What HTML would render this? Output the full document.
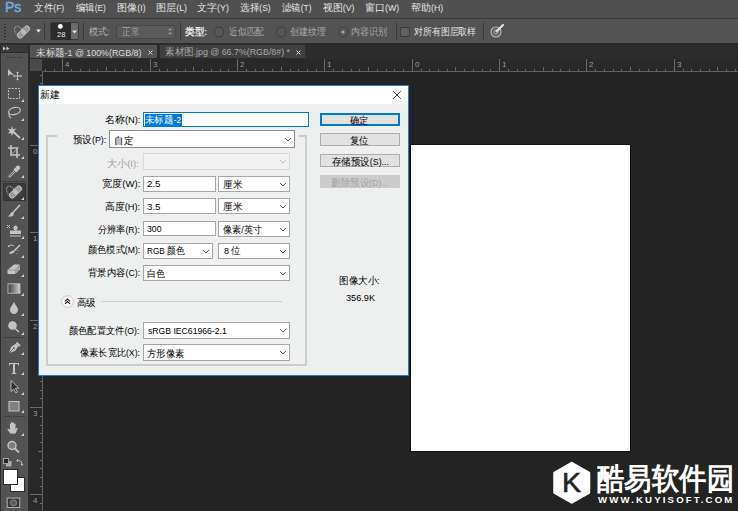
<!DOCTYPE html>
<html><head><meta charset="utf-8"><style>
html,body{margin:0;padding:0;width:738px;height:511px;overflow:hidden;background:#232323;position:relative}
</style></head><body>
<div style="position:absolute;left:0px;top:0px;width:738px;height:18px;background:#505050"></div><div style="position:absolute;left:0px;top:18px;width:738px;height:1px;background:#3a3a3a"></div><div style="position:absolute;left:4.79px;top:-3.00px;white-space:nowrap;line-height:20px;font-family:'Liberation Sans',sans-serif;font-size:15.5px;color:#74aadd;-webkit-text-stroke:0.5px #74aadd;transform:scaleX(0.9059);transform-origin:0 0">Ps</div><div style="position:absolute;left:34.03px;top:-2.00px;white-space:nowrap;line-height:20px;font-family:'Liberation Sans',sans-serif;font-size:10.2px;color:#e4e4e4;;transform:scaleX(0.9667);transform-origin:0 0">文件<span style="font-size:8.8px">(F)</span></div><div style="position:absolute;left:76.00px;top:-2.00px;white-space:nowrap;line-height:20px;font-family:'Liberation Sans',sans-serif;font-size:10.2px;color:#e4e4e4;;transform:scaleX(0.9355);transform-origin:0 0">编辑<span style="font-size:8.8px">(E)</span></div><div style="position:absolute;left:116.69px;top:-2.00px;white-space:nowrap;line-height:20px;font-family:'Liberation Sans',sans-serif;font-size:10.2px;color:#e4e4e4;;transform:scaleX(1.0111);transform-origin:0 0">图像<span style="font-size:8.8px">(I)</span></div><div style="position:absolute;left:155.69px;top:-2.00px;white-space:nowrap;line-height:20px;font-family:'Liberation Sans',sans-serif;font-size:10.2px;color:#e4e4e4;;transform:scaleX(1.0103);transform-origin:0 0">图层<span style="font-size:8.8px">(L)</span></div><div style="position:absolute;left:196.90px;top:-2.00px;white-space:nowrap;line-height:20px;font-family:'Liberation Sans',sans-serif;font-size:10.2px;color:#e4e4e4;;transform:scaleX(1.0033);transform-origin:0 0">文字<span style="font-size:8.8px">(Y)</span></div><div style="position:absolute;left:239.73px;top:-2.00px;white-space:nowrap;line-height:20px;font-family:'Liberation Sans',sans-serif;font-size:10.2px;color:#e4e4e4;;transform:scaleX(0.9667);transform-origin:0 0">选择<span style="font-size:8.8px">(S)</span></div><div style="position:absolute;left:281.80px;top:-2.00px;white-space:nowrap;line-height:20px;font-family:'Liberation Sans',sans-serif;font-size:10.2px;color:#e4e4e4;;transform:scaleX(0.9419);transform-origin:0 0">滤镜<span style="font-size:8.8px">(T)</span></div><div style="position:absolute;left:323.00px;top:-2.00px;white-space:nowrap;line-height:20px;font-family:'Liberation Sans',sans-serif;font-size:10.2px;color:#e4e4e4;;transform:scaleX(0.9903);transform-origin:0 0">视图<span style="font-size:8.8px">(V)</span></div><div style="position:absolute;left:365.00px;top:-2.00px;white-space:nowrap;line-height:20px;font-family:'Liberation Sans',sans-serif;font-size:10.2px;color:#e4e4e4;;transform:scaleX(1.0000);transform-origin:0 0">窗口<span style="font-size:8.8px">(W)</span></div><div style="position:absolute;left:411.00px;top:-2.00px;white-space:nowrap;line-height:20px;font-family:'Liberation Sans',sans-serif;font-size:10.2px;color:#e4e4e4;;transform:scaleX(1.0000);transform-origin:0 0">帮助<span style="font-size:8.8px">(H)</span></div><div style="position:absolute;left:0px;top:19px;width:738px;height:24px;background:#535353"></div><div style="position:absolute;left:0px;top:43px;width:738px;height:2px;background:#2c2c2c"></div><div style="position:absolute;left:28px;top:44px;width:710px;height:467px;background:#232323"></div><div style="position:absolute;left:28px;top:43px;width:710px;height:16px;background:#2c2c2c"></div><div style="position:absolute;left:30px;top:45px;width:127px;height:13px;background:#535353"></div><div style="position:absolute;left:36.25px;top:43.00px;white-space:nowrap;line-height:20px;font-family:'Liberation Sans',sans-serif;font-size:9.8px;color:#dcdcdc;;transform:scaleX(0.9523);transform-origin:0 0">未标题<span style="font-size:9.3px">-1 @ 100%(RGB/8)</span></div><svg style="position:absolute;left:147.5px;top:49.8px" width="5" height="5" viewBox="0 0 5 5"><path d="M0.5 0.5L4.5 4.5M4.5 0.5L0.5 4.5" stroke="#d8d8d8" stroke-width="1"/></svg><div style="position:absolute;left:160px;top:45px;width:145px;height:13px;background:#3f3f3f"></div><div style="position:absolute;left:164.85px;top:42.00px;white-space:nowrap;line-height:20px;font-family:'Liberation Sans',sans-serif;font-size:9.8px;color:#a8a8a8;;transform:scaleX(0.9515);transform-origin:0 0">素材图<span style="font-size:9.3px">.jpg @ 66.7%(RGB/8#) *</span></div><svg style="position:absolute;left:295.5px;top:49.8px" width="5" height="5" viewBox="0 0 5 5"><path d="M0.5 0.5L4.5 4.5M4.5 0.5L0.5 4.5" stroke="#e0e0e0" stroke-width="1"/></svg><div style="position:absolute;left:30px;top:59px;width:708px;height:13px;background:#292929"></div><div style="position:absolute;left:42px;top:71px;width:696px;height:1px;background:#606060"></div><div style="position:absolute;left:30px;top:59px;width:12px;height:12px;background:#4a4a4a"></div><div style="position:absolute;left:30px;top:72px;width:13px;height:439px;background:#282828"></div><div style="position:absolute;left:42px;top:72px;width:1px;height:439px;background:#606060"></div><div style="position:absolute;left:0px;top:43px;width:30px;height:468px;background:#2c2c2c"></div><div style="position:absolute;left:1px;top:45px;width:27px;height:7px;background:#393939"></div><div style="position:absolute;left:1px;top:53px;width:27px;height:458px;background:#535353"></div><div style="position:absolute;left:45px;top:69px;width:1px;height:2px;background:#6a6a6a"></div><div style="position:absolute;left:54px;top:69px;width:1px;height:2px;background:#6a6a6a"></div><div style="position:absolute;left:62px;top:59px;width:1px;height:12px;background:#6a6a6a"></div><div style="position:absolute;left:65px;top:60px;white-space:nowrap;font-family:'Liberation Sans',sans-serif;font-size:8px;line-height:10px;color:#9a9a9a">4</div><div style="position:absolute;left:71px;top:69px;width:1px;height:2px;background:#6a6a6a"></div><div style="position:absolute;left:80px;top:69px;width:1px;height:2px;background:#6a6a6a"></div><div style="position:absolute;left:89px;top:69px;width:1px;height:2px;background:#6a6a6a"></div><div style="position:absolute;left:97px;top:69px;width:1px;height:2px;background:#6a6a6a"></div><div style="position:absolute;left:106px;top:67px;width:1px;height:4px;background:#6a6a6a"></div><div style="position:absolute;left:115px;top:69px;width:1px;height:2px;background:#6a6a6a"></div><div style="position:absolute;left:124px;top:69px;width:1px;height:2px;background:#6a6a6a"></div><div style="position:absolute;left:132px;top:69px;width:1px;height:2px;background:#6a6a6a"></div><div style="position:absolute;left:141px;top:69px;width:1px;height:2px;background:#6a6a6a"></div><div style="position:absolute;left:150px;top:59px;width:1px;height:12px;background:#6a6a6a"></div><div style="position:absolute;left:153px;top:60px;white-space:nowrap;font-family:'Liberation Sans',sans-serif;font-size:8px;line-height:10px;color:#9a9a9a">3</div><div style="position:absolute;left:159px;top:69px;width:1px;height:2px;background:#6a6a6a"></div><div style="position:absolute;left:167px;top:69px;width:1px;height:2px;background:#6a6a6a"></div><div style="position:absolute;left:176px;top:69px;width:1px;height:2px;background:#6a6a6a"></div><div style="position:absolute;left:185px;top:69px;width:1px;height:2px;background:#6a6a6a"></div><div style="position:absolute;left:193px;top:67px;width:1px;height:4px;background:#6a6a6a"></div><div style="position:absolute;left:202px;top:69px;width:1px;height:2px;background:#6a6a6a"></div><div style="position:absolute;left:211px;top:69px;width:1px;height:2px;background:#6a6a6a"></div><div style="position:absolute;left:220px;top:69px;width:1px;height:2px;background:#6a6a6a"></div><div style="position:absolute;left:228px;top:69px;width:1px;height:2px;background:#6a6a6a"></div><div style="position:absolute;left:237px;top:59px;width:1px;height:12px;background:#6a6a6a"></div><div style="position:absolute;left:240px;top:60px;white-space:nowrap;font-family:'Liberation Sans',sans-serif;font-size:8px;line-height:10px;color:#9a9a9a">2</div><div style="position:absolute;left:246px;top:69px;width:1px;height:2px;background:#6a6a6a"></div><div style="position:absolute;left:255px;top:69px;width:1px;height:2px;background:#6a6a6a"></div><div style="position:absolute;left:263px;top:69px;width:1px;height:2px;background:#6a6a6a"></div><div style="position:absolute;left:272px;top:69px;width:1px;height:2px;background:#6a6a6a"></div><div style="position:absolute;left:281px;top:67px;width:1px;height:4px;background:#6a6a6a"></div><div style="position:absolute;left:290px;top:69px;width:1px;height:2px;background:#6a6a6a"></div><div style="position:absolute;left:298px;top:69px;width:1px;height:2px;background:#6a6a6a"></div><div style="position:absolute;left:307px;top:69px;width:1px;height:2px;background:#6a6a6a"></div><div style="position:absolute;left:316px;top:69px;width:1px;height:2px;background:#6a6a6a"></div><div style="position:absolute;left:324px;top:59px;width:1px;height:12px;background:#6a6a6a"></div><div style="position:absolute;left:327px;top:60px;white-space:nowrap;font-family:'Liberation Sans',sans-serif;font-size:8px;line-height:10px;color:#9a9a9a">1</div><div style="position:absolute;left:333px;top:69px;width:1px;height:2px;background:#6a6a6a"></div><div style="position:absolute;left:342px;top:69px;width:1px;height:2px;background:#6a6a6a"></div><div style="position:absolute;left:351px;top:69px;width:1px;height:2px;background:#6a6a6a"></div><div style="position:absolute;left:359px;top:69px;width:1px;height:2px;background:#6a6a6a"></div><div style="position:absolute;left:368px;top:67px;width:1px;height:4px;background:#6a6a6a"></div><div style="position:absolute;left:377px;top:69px;width:1px;height:2px;background:#6a6a6a"></div><div style="position:absolute;left:386px;top:69px;width:1px;height:2px;background:#6a6a6a"></div><div style="position:absolute;left:394px;top:69px;width:1px;height:2px;background:#6a6a6a"></div><div style="position:absolute;left:403px;top:69px;width:1px;height:2px;background:#6a6a6a"></div><div style="position:absolute;left:412px;top:59px;width:1px;height:12px;background:#6a6a6a"></div><div style="position:absolute;left:415px;top:60px;white-space:nowrap;font-family:'Liberation Sans',sans-serif;font-size:8px;line-height:10px;color:#9a9a9a">0</div><div style="position:absolute;left:421px;top:69px;width:1px;height:2px;background:#6a6a6a"></div><div style="position:absolute;left:429px;top:69px;width:1px;height:2px;background:#6a6a6a"></div><div style="position:absolute;left:438px;top:69px;width:1px;height:2px;background:#6a6a6a"></div><div style="position:absolute;left:447px;top:69px;width:1px;height:2px;background:#6a6a6a"></div><div style="position:absolute;left:455px;top:67px;width:1px;height:4px;background:#6a6a6a"></div><div style="position:absolute;left:464px;top:69px;width:1px;height:2px;background:#6a6a6a"></div><div style="position:absolute;left:473px;top:69px;width:1px;height:2px;background:#6a6a6a"></div><div style="position:absolute;left:482px;top:69px;width:1px;height:2px;background:#6a6a6a"></div><div style="position:absolute;left:490px;top:69px;width:1px;height:2px;background:#6a6a6a"></div><div style="position:absolute;left:499px;top:59px;width:1px;height:12px;background:#6a6a6a"></div><div style="position:absolute;left:502px;top:60px;white-space:nowrap;font-family:'Liberation Sans',sans-serif;font-size:8px;line-height:10px;color:#9a9a9a">1</div><div style="position:absolute;left:508px;top:69px;width:1px;height:2px;background:#6a6a6a"></div><div style="position:absolute;left:517px;top:69px;width:1px;height:2px;background:#6a6a6a"></div><div style="position:absolute;left:525px;top:69px;width:1px;height:2px;background:#6a6a6a"></div><div style="position:absolute;left:534px;top:69px;width:1px;height:2px;background:#6a6a6a"></div><div style="position:absolute;left:543px;top:67px;width:1px;height:4px;background:#6a6a6a"></div><div style="position:absolute;left:552px;top:69px;width:1px;height:2px;background:#6a6a6a"></div><div style="position:absolute;left:560px;top:69px;width:1px;height:2px;background:#6a6a6a"></div><div style="position:absolute;left:569px;top:69px;width:1px;height:2px;background:#6a6a6a"></div><div style="position:absolute;left:578px;top:69px;width:1px;height:2px;background:#6a6a6a"></div><div style="position:absolute;left:586px;top:59px;width:1px;height:12px;background:#6a6a6a"></div><div style="position:absolute;left:589px;top:60px;white-space:nowrap;font-family:'Liberation Sans',sans-serif;font-size:8px;line-height:10px;color:#9a9a9a">2</div><div style="position:absolute;left:595px;top:69px;width:1px;height:2px;background:#6a6a6a"></div><div style="position:absolute;left:604px;top:69px;width:1px;height:2px;background:#6a6a6a"></div><div style="position:absolute;left:613px;top:69px;width:1px;height:2px;background:#6a6a6a"></div><div style="position:absolute;left:621px;top:69px;width:1px;height:2px;background:#6a6a6a"></div><div style="position:absolute;left:630px;top:67px;width:1px;height:4px;background:#6a6a6a"></div><div style="position:absolute;left:639px;top:69px;width:1px;height:2px;background:#6a6a6a"></div><div style="position:absolute;left:648px;top:69px;width:1px;height:2px;background:#6a6a6a"></div><div style="position:absolute;left:656px;top:69px;width:1px;height:2px;background:#6a6a6a"></div><div style="position:absolute;left:665px;top:69px;width:1px;height:2px;background:#6a6a6a"></div><div style="position:absolute;left:674px;top:59px;width:1px;height:12px;background:#6a6a6a"></div><div style="position:absolute;left:677px;top:60px;white-space:nowrap;font-family:'Liberation Sans',sans-serif;font-size:8px;line-height:10px;color:#9a9a9a">3</div><div style="position:absolute;left:683px;top:69px;width:1px;height:2px;background:#6a6a6a"></div><div style="position:absolute;left:691px;top:69px;width:1px;height:2px;background:#6a6a6a"></div><div style="position:absolute;left:700px;top:69px;width:1px;height:2px;background:#6a6a6a"></div><div style="position:absolute;left:709px;top:69px;width:1px;height:2px;background:#6a6a6a"></div><div style="position:absolute;left:717px;top:67px;width:1px;height:4px;background:#6a6a6a"></div><div style="position:absolute;left:726px;top:69px;width:1px;height:2px;background:#6a6a6a"></div><div style="position:absolute;left:735px;top:69px;width:1px;height:2px;background:#6a6a6a"></div><div style="position:absolute;left:40px;top:75px;width:2px;height:1px;background:#6a6a6a"></div><div style="position:absolute;left:40px;top:83px;width:2px;height:1px;background:#6a6a6a"></div><div style="position:absolute;left:40px;top:92px;width:2px;height:1px;background:#6a6a6a"></div><div style="position:absolute;left:38px;top:101px;width:4px;height:1px;background:#6a6a6a"></div><div style="position:absolute;left:40px;top:110px;width:2px;height:1px;background:#6a6a6a"></div><div style="position:absolute;left:40px;top:118px;width:2px;height:1px;background:#6a6a6a"></div><div style="position:absolute;left:40px;top:127px;width:2px;height:1px;background:#6a6a6a"></div><div style="position:absolute;left:40px;top:136px;width:2px;height:1px;background:#6a6a6a"></div><div style="position:absolute;left:30px;top:145px;width:12px;height:1px;background:#6a6a6a"></div><div style="position:absolute;left:33px;top:147px;white-space:nowrap;font-family:'Liberation Sans',sans-serif;font-size:8px;line-height:10px;color:#9a9a9a">0</div><div style="position:absolute;left:40px;top:153px;width:2px;height:1px;background:#6a6a6a"></div><div style="position:absolute;left:40px;top:162px;width:2px;height:1px;background:#6a6a6a"></div><div style="position:absolute;left:40px;top:171px;width:2px;height:1px;background:#6a6a6a"></div><div style="position:absolute;left:40px;top:180px;width:2px;height:1px;background:#6a6a6a"></div><div style="position:absolute;left:38px;top:188px;width:4px;height:1px;background:#6a6a6a"></div><div style="position:absolute;left:40px;top:197px;width:2px;height:1px;background:#6a6a6a"></div><div style="position:absolute;left:40px;top:206px;width:2px;height:1px;background:#6a6a6a"></div><div style="position:absolute;left:40px;top:215px;width:2px;height:1px;background:#6a6a6a"></div><div style="position:absolute;left:40px;top:223px;width:2px;height:1px;background:#6a6a6a"></div><div style="position:absolute;left:30px;top:232px;width:12px;height:1px;background:#6a6a6a"></div><div style="position:absolute;left:33px;top:234px;white-space:nowrap;font-family:'Liberation Sans',sans-serif;font-size:8px;line-height:10px;color:#9a9a9a">1</div><div style="position:absolute;left:40px;top:241px;width:2px;height:1px;background:#6a6a6a"></div><div style="position:absolute;left:40px;top:250px;width:2px;height:1px;background:#6a6a6a"></div><div style="position:absolute;left:40px;top:258px;width:2px;height:1px;background:#6a6a6a"></div><div style="position:absolute;left:40px;top:267px;width:2px;height:1px;background:#6a6a6a"></div><div style="position:absolute;left:38px;top:276px;width:4px;height:1px;background:#6a6a6a"></div><div style="position:absolute;left:40px;top:285px;width:2px;height:1px;background:#6a6a6a"></div><div style="position:absolute;left:40px;top:293px;width:2px;height:1px;background:#6a6a6a"></div><div style="position:absolute;left:40px;top:302px;width:2px;height:1px;background:#6a6a6a"></div><div style="position:absolute;left:40px;top:311px;width:2px;height:1px;background:#6a6a6a"></div><div style="position:absolute;left:30px;top:320px;width:12px;height:1px;background:#6a6a6a"></div><div style="position:absolute;left:33px;top:322px;white-space:nowrap;font-family:'Liberation Sans',sans-serif;font-size:8px;line-height:10px;color:#9a9a9a">2</div><div style="position:absolute;left:40px;top:328px;width:2px;height:1px;background:#6a6a6a"></div><div style="position:absolute;left:40px;top:337px;width:2px;height:1px;background:#6a6a6a"></div><div style="position:absolute;left:40px;top:346px;width:2px;height:1px;background:#6a6a6a"></div><div style="position:absolute;left:40px;top:355px;width:2px;height:1px;background:#6a6a6a"></div><div style="position:absolute;left:38px;top:363px;width:4px;height:1px;background:#6a6a6a"></div><div style="position:absolute;left:40px;top:372px;width:2px;height:1px;background:#6a6a6a"></div><div style="position:absolute;left:40px;top:381px;width:2px;height:1px;background:#6a6a6a"></div><div style="position:absolute;left:40px;top:390px;width:2px;height:1px;background:#6a6a6a"></div><div style="position:absolute;left:40px;top:398px;width:2px;height:1px;background:#6a6a6a"></div><div style="position:absolute;left:30px;top:407px;width:12px;height:1px;background:#6a6a6a"></div><div style="position:absolute;left:33px;top:409px;white-space:nowrap;font-family:'Liberation Sans',sans-serif;font-size:8px;line-height:10px;color:#9a9a9a">3</div><div style="position:absolute;left:40px;top:416px;width:2px;height:1px;background:#6a6a6a"></div><div style="position:absolute;left:40px;top:425px;width:2px;height:1px;background:#6a6a6a"></div><div style="position:absolute;left:40px;top:433px;width:2px;height:1px;background:#6a6a6a"></div><div style="position:absolute;left:40px;top:442px;width:2px;height:1px;background:#6a6a6a"></div><div style="position:absolute;left:38px;top:451px;width:4px;height:1px;background:#6a6a6a"></div><div style="position:absolute;left:40px;top:460px;width:2px;height:1px;background:#6a6a6a"></div><div style="position:absolute;left:40px;top:468px;width:2px;height:1px;background:#6a6a6a"></div><div style="position:absolute;left:40px;top:477px;width:2px;height:1px;background:#6a6a6a"></div><div style="position:absolute;left:40px;top:486px;width:2px;height:1px;background:#6a6a6a"></div><div style="position:absolute;left:30px;top:494px;width:12px;height:1px;background:#6a6a6a"></div><div style="position:absolute;left:33px;top:496px;white-space:nowrap;font-family:'Liberation Sans',sans-serif;font-size:8px;line-height:10px;color:#9a9a9a">4</div><div style="position:absolute;left:40px;top:503px;width:2px;height:1px;background:#6a6a6a"></div><div style="position:absolute;left:410px;top:144px;width:221px;height:308px;background:#111"></div><div style="position:absolute;left:411px;top:145px;width:219px;height:306px;background:#fff"></div><div style="position:absolute;left:38px;top:85px;width:371px;height:291px;background:#2b79c2"></div><div style="position:absolute;left:39px;top:86px;width:369px;height:18px;background:#fff"></div><div style="position:absolute;left:39px;top:104px;width:369px;height:271px;background:#eeefef"></div><div style="position:absolute;left:39.61px;top:85.00px;white-space:nowrap;line-height:20px;font-family:'Liberation Sans',sans-serif;font-size:10.3px;color:#000;;transform:scaleX(0.9889);transform-origin:0 0">新建</div><div style="position:absolute;left:4px;top:24px;width:2px;height:1px;background:#333"></div><div style="position:absolute;left:4px;top:27px;width:2px;height:1px;background:#333"></div><div style="position:absolute;left:4px;top:30px;width:2px;height:1px;background:#333"></div><div style="position:absolute;left:4px;top:33px;width:2px;height:1px;background:#333"></div><div style="position:absolute;left:4px;top:36px;width:2px;height:1px;background:#333"></div><div style="position:absolute;left:4px;top:39px;width:2px;height:1px;background:#333"></div><svg style="position:absolute;left:13px;top:24px" width="19" height="15" viewBox="0 0 19 15"><ellipse cx="5.2" cy="6.5" rx="3.4" ry="4.6" transform="rotate(-25 5.2 6.5)" fill="none" stroke="#bdbdbd" stroke-width="0.9" stroke-dasharray="1 0.7"/><g transform="rotate(-45 10.5 8)"><rect x="3" y="5.2" width="15" height="5.6" rx="2.8" fill="#9a9a9a" stroke="#cfcfcf" stroke-width="0.8"/><rect x="8.5" y="5.6" width="4" height="4.8" fill="#bdbdbd"/></g></svg><svg style="position:absolute;left:36px;top:29px" width="5" height="4" viewBox="0 0 5 4"><path d="M0 0.5H5L2.5 3.5Z" fill="#e6e6e6"/></svg><div style="position:absolute;left:44px;top:23px;width:1px;height:17px;background:#3a3a3a"></div><div style="position:absolute;left:50px;top:22px;width:29px;height:18px;background:#3a3a3a;border-radius:2px"></div><div style="position:absolute;left:50.5px;top:22.5px;width:21px;height:17px;background:#2c2c2c"></div><svg style="position:absolute;left:56px;top:22px" width="9" height="9" viewBox="0 0 9 9"><circle cx="4.3" cy="4.4" r="2.4" fill="#fff"/></svg><div style="position:absolute;left:56.90px;top:25.00px;white-space:nowrap;line-height:20px;font-family:'Liberation Sans',sans-serif;font-size:8px;color:#e8e8e8;;transform:scaleX(0.9444);transform-origin:0 0">28</div><div style="position:absolute;left:71px;top:23px;width:7px;height:16px;background:#6a6a6a"></div><svg style="position:absolute;left:72px;top:30px" width="5" height="4" viewBox="0 0 5 4"><path d="M0 0.5H5L2.5 3.5Z" fill="#e6e6e6"/></svg><div style="position:absolute;left:83px;top:23px;width:1px;height:17px;background:#3a3a3a"></div><div style="position:absolute;left:89.30px;top:22.00px;white-space:nowrap;line-height:20px;font-family:'Liberation Sans',sans-serif;font-size:10px;color:#b4b4b4;;transform:scaleX(0.9182);transform-origin:0 0">模式<span style="font-size:9px">:</span></div><div style="position:absolute;left:116px;top:25px;width:58px;height:12px;border:1px solid #474747;border-radius:3px;background:#5a5a5a"></div><div style="position:absolute;left:121.90px;top:22.00px;white-space:nowrap;line-height:20px;font-family:'Liberation Sans',sans-serif;font-size:10px;color:#a0a0a0;;transform:scaleX(0.8789);transform-origin:0 0">正常</div><svg style="position:absolute;left:167px;top:27px" width="6" height="9" viewBox="0 0 6 9"><path d="M0.8 3.3L3 1.2L5.2 3.3ZM0.8 5.7L3 7.8L5.2 5.7Z" fill="#a0a0a0"/></svg><div style="position:absolute;left:180px;top:23px;width:1px;height:17px;background:#3a3a3a"></div><div style="position:absolute;left:185.20px;top:22.00px;white-space:nowrap;line-height:20px;font-family:'Liberation Sans',sans-serif;font-size:10px;color:#ececec;font-weight:bold;transform:scaleX(0.9636);transform-origin:0 0">类型<span style="font-size:9px">:</span></div><svg style="position:absolute;left:213.4px;top:25.7px" width="12" height="12" viewBox="0 0 12 12"><circle cx="6" cy="6" r="4.8" fill="#575757" stroke="#3d3d3d" stroke-width="1"/></svg><div style="position:absolute;left:228.52px;top:22.00px;white-space:nowrap;line-height:20px;font-family:'Liberation Sans',sans-serif;font-size:10px;color:#a8a8a8;;transform:scaleX(0.8795);transform-origin:0 0">近似匹配</div><svg style="position:absolute;left:275px;top:25.7px" width="12" height="12" viewBox="0 0 12 12"><circle cx="6" cy="6" r="4.8" fill="#575757" stroke="#3d3d3d" stroke-width="1"/></svg><div style="position:absolute;left:290.10px;top:22.00px;white-space:nowrap;line-height:20px;font-family:'Liberation Sans',sans-serif;font-size:10px;color:#a8a8a8;;transform:scaleX(0.9026);transform-origin:0 0">创建纹理</div><svg style="position:absolute;left:336.7px;top:25.7px" width="12" height="12" viewBox="0 0 12 12"><circle cx="6" cy="6" r="4.8" fill="#575757" stroke="#3d3d3d" stroke-width="1"/><circle cx="6" cy="6" r="1.5" fill="#a8a8a8"/></svg><div style="position:absolute;left:351.40px;top:22.00px;white-space:nowrap;line-height:20px;font-family:'Liberation Sans',sans-serif;font-size:10px;color:#a8a8a8;;transform:scaleX(0.9026);transform-origin:0 0">内容识别</div><div style="position:absolute;left:396px;top:23px;width:1px;height:17px;background:#3a3a3a"></div><div style="position:absolute;left:400px;top:27px;width:10px;height:10px;background:#606060;border-radius:2px;box-shadow:inset 0 0 0 1px #3c3c3c"></div><div style="position:absolute;left:414.10px;top:22.00px;white-space:nowrap;line-height:20px;font-family:'Liberation Sans',sans-serif;font-size:10px;color:#e4e4e4;;transform:scaleX(0.8884);transform-origin:0 0">对所有图层取样</div><div style="position:absolute;left:483px;top:23px;width:1px;height:17px;background:#3a3a3a"></div><svg style="position:absolute;left:490px;top:24px" width="16" height="14" viewBox="0 0 16 14"><circle cx="6" cy="8" r="5" fill="none" stroke="#b8b8b8" stroke-width="1.2"/><circle cx="6" cy="8" r="2.3" fill="none" stroke="#b8b8b8" stroke-width="1"/><path d="M6.5 7.5L13 1" stroke="#e0e0e0" stroke-width="2.2" stroke-linecap="round"/></svg><svg style="position:absolute;left:3px;top:46px" width="7" height="5" viewBox="0 0 7 5"><path d="M0 0.5L2.8 2.5L0 4.5ZM3.5 0.5L6.3 2.5L3.5 4.5Z" fill="#c8c8c8"/></svg><div style="position:absolute;left:7px;top:57px;width:15px;height:1px;background:repeating-linear-gradient(90deg,#333 0 1.5px,transparent 1.5px 2px)"></div><svg style="position:absolute;left:6px;top:68px" width="16" height="14" viewBox="0 0 16 14"><path d="M2 1L2 8L4 6.3L8 7Z" fill="#c4c4c4"/><path d="M11.5 4.5V11.5M8 8H15" stroke="#c4c4c4" stroke-width="1"/><path d="M11.5 3.5L10 5H13ZM11.5 12.5L10 11H13ZM7 8L8.5 6.5V9.5ZM16 8L14.5 6.5V9.5Z" fill="#c4c4c4"/></svg><svg style="position:absolute;left:6px;top:87px" width="16" height="14" viewBox="0 0 16 14"><rect x="2.5" y="1.5" width="11" height="10" fill="none" stroke="#c4c4c4" stroke-width="1" stroke-dasharray="2 1.2"/></svg><svg style="position:absolute;left:21px;top:99px" width="3" height="3" viewBox="0 0 3 3"><path d="M3 0V3H0Z" fill="#d0d0d0"/></svg><svg style="position:absolute;left:6px;top:106px" width="16" height="14" viewBox="0 0 16 14"><ellipse cx="8.5" cy="5" rx="6" ry="3.5" fill="none" stroke="#c4c4c4" stroke-width="1.2" transform="rotate(-15 8.5 5)"/><path d="M3.5 7C2.5 9 3.5 11 5 12" fill="none" stroke="#c4c4c4" stroke-width="1.1"/></svg><svg style="position:absolute;left:21px;top:118px" width="3" height="3" viewBox="0 0 3 3"><path d="M3 0V3H0Z" fill="#d0d0d0"/></svg><svg style="position:absolute;left:6px;top:125px" width="16" height="14" viewBox="0 0 16 14"><path d="M6 1L7 4.2L10.3 3.5L8 6L10.5 8.5L7.2 8L6 11L5 8L1.8 8.5L4 6L1.5 3.5L5 4.2Z" fill="#c4c4c4"/><path d="M8 7.5L14 13" stroke="#c4c4c4" stroke-width="1.8"/></svg><svg style="position:absolute;left:21px;top:137px" width="3" height="3" viewBox="0 0 3 3"><path d="M3 0V3H0Z" fill="#d0d0d0"/></svg><svg style="position:absolute;left:6px;top:144px" width="16" height="14" viewBox="0 0 16 14"><path d="M5 1V11H14M2 4H11V14" fill="none" stroke="#c4c4c4" stroke-width="1.6"/><path d="M5 11L13 3" stroke="#c4c4c4" stroke-width="0.7"/></svg><svg style="position:absolute;left:21px;top:156px" width="3" height="3" viewBox="0 0 3 3"><path d="M3 0V3H0Z" fill="#d0d0d0"/></svg><svg style="position:absolute;left:6px;top:164px" width="16" height="14" viewBox="0 0 16 14"><path d="M3 13L10 6" stroke="#c4c4c4" stroke-width="2.2"/><path d="M3.6 12.4L9.4 6.6" stroke="#535353" stroke-width="0.9"/><path d="M8.5 4.5L11.5 7.5" stroke="#c4c4c4" stroke-width="2.6"/><circle cx="12" cy="3.8" r="2.2" fill="#c4c4c4"/></svg><svg style="position:absolute;left:21px;top:175px" width="3" height="3" viewBox="0 0 3 3"><path d="M3 0V3H0Z" fill="#d0d0d0"/></svg><div style="position:absolute;left:2px;top:181px;width:24px;height:1px;background:#3e3e3e"></div><div style="position:absolute;left:3px;top:183px;width:23px;height:18px;background:#3c3c3c;border-radius:2px;box-shadow:inset 0 0 0 1px #333"></div><svg style="position:absolute;left:5px;top:184px" width="19" height="15" viewBox="0 0 19 15"><ellipse cx="5.2" cy="6.5" rx="3.4" ry="4.6" transform="rotate(-25 5.2 6.5)" fill="none" stroke="#bdbdbd" stroke-width="0.9" stroke-dasharray="1 0.7"/><g transform="rotate(-45 10.5 8)"><rect x="3" y="5.2" width="15" height="5.6" rx="2.8" fill="#9a9a9a" stroke="#cfcfcf" stroke-width="0.8"/><rect x="8.5" y="5.6" width="4" height="4.8" fill="#bdbdbd"/></g></svg><svg style="position:absolute;left:21px;top:197px" width="3" height="3" viewBox="0 0 3 3"><path d="M3 0V3H0Z" fill="#d0d0d0"/></svg><svg style="position:absolute;left:6px;top:204px" width="16" height="14" viewBox="0 0 16 14"><path d="M14 1L7 8.5" stroke="#c4c4c4" stroke-width="1.6"/><path d="M7.5 8C5.5 7.5 4.5 9 4 10.5C3.3 11.8 2 12 1.5 12C3.5 13 7 12.8 7.5 11C8 10 8 9 7.5 8Z" fill="#c4c4c4"/></svg><svg style="position:absolute;left:21px;top:216px" width="3" height="3" viewBox="0 0 3 3"><path d="M3 0V3H0Z" fill="#d0d0d0"/></svg><svg style="position:absolute;left:6px;top:224px" width="16" height="14" viewBox="0 0 16 14"><path d="M1 1L4 4M4 1L1 4" stroke="#c4c4c4" stroke-width="1"/><rect x="7.5" y="1.5" width="4" height="5" rx="2" fill="#c4c4c4"/><rect x="4" y="6.5" width="11" height="3.5" fill="#c4c4c4"/><rect x="4" y="11.5" width="11" height="1" fill="#c4c4c4"/></svg><svg style="position:absolute;left:21px;top:236px" width="3" height="3" viewBox="0 0 3 3"><path d="M3 0V3H0Z" fill="#d0d0d0"/></svg><svg style="position:absolute;left:6px;top:243px" width="16" height="14" viewBox="0 0 16 14"><path d="M2 3.5C4 1.8 6.5 1.5 8 3" fill="none" stroke="#c4c4c4" stroke-width="1"/><path d="M1.5 3.2L3.5 2V4.5Z" fill="#c4c4c4"/><path d="M14 2L8 8" stroke="#c4c4c4" stroke-width="1.6"/><path d="M8.5 8C6.5 7.2 4.5 8 3 10.5C5.5 11 8.5 10.5 8.5 8Z" fill="#c4c4c4"/><path d="M12 7V8M11 10V11" stroke="#c4c4c4" stroke-width="0.8"/></svg><svg style="position:absolute;left:21px;top:255px" width="3" height="3" viewBox="0 0 3 3"><path d="M3 0V3H0Z" fill="#d0d0d0"/></svg><svg style="position:absolute;left:6px;top:262px" width="16" height="14" viewBox="0 0 16 14"><path d="M1.5 8L8 2.5H14L9.5 8V12H1.5Z" fill="#c4c4c4"/><path d="M9.5 8L14 3.5V7.5L9.5 12" fill="#a8a8a8"/><path d="M1.5 8H9.5" stroke="#8a8a8a" stroke-width="0.8"/></svg><svg style="position:absolute;left:21px;top:274px" width="3" height="3" viewBox="0 0 3 3"><path d="M3 0V3H0Z" fill="#d0d0d0"/></svg><svg style="position:absolute;left:7px;top:283px" width="14" height="11" viewBox="0 0 14 11"><defs><linearGradient id="g1" x1="0" x2="1"><stop offset="0" stop-color="#3a3a3a"/><stop offset="1" stop-color="#d0d0d0"/></linearGradient></defs><rect x="1" y="0.8" width="12" height="9.4" fill="url(#g1)" stroke="#bdbdbd" stroke-width="0.9"/></svg><svg style="position:absolute;left:21px;top:293px" width="3" height="3" viewBox="0 0 3 3"><path d="M3 0V3H0Z" fill="#d0d0d0"/></svg><svg style="position:absolute;left:6px;top:301px" width="16" height="14" viewBox="0 0 16 14"><path d="M8 1C9.5 4 12 6.5 12 9C12 11.3 10.2 13 8 13C5.8 13 4 11.3 4 9C4 6.5 6.5 4 8 1Z" fill="#c4c4c4"/></svg><svg style="position:absolute;left:21px;top:313px" width="3" height="3" viewBox="0 0 3 3"><path d="M3 0V3H0Z" fill="#d0d0d0"/></svg><svg style="position:absolute;left:6px;top:320px" width="16" height="14" viewBox="0 0 16 14"><circle cx="6.5" cy="5.5" r="4.3" fill="#c4c4c4"/><path d="M9 8.5L13 12" stroke="#c4c4c4" stroke-width="1.6"/></svg><svg style="position:absolute;left:21px;top:332px" width="3" height="3" viewBox="0 0 3 3"><path d="M3 0V3H0Z" fill="#d0d0d0"/></svg><div style="position:absolute;left:4px;top:337px;width:21px;height:1px;background:#3e3e3e"></div><svg style="position:absolute;left:6px;top:340px" width="16" height="14" viewBox="0 0 16 14"><path d="M3 13L5 7L10 3.5L12.5 6L9 11Z" fill="#c4c4c4"/><path d="M10.5 2.5L14 6" stroke="#c4c4c4" stroke-width="1.8"/><path d="M3 13L7.5 8.5" stroke="#535353" stroke-width="0.8"/><circle cx="7.8" cy="8.2" r="0.9" fill="#535353"/></svg><svg style="position:absolute;left:21px;top:352px" width="3" height="3" viewBox="0 0 3 3"><path d="M3 0V3H0Z" fill="#d0d0d0"/></svg><svg style="position:absolute;left:6px;top:361px" width="16" height="14" viewBox="0 0 16 14"><path d="M3 2H13V4.5H12.2C12 3.3 11.5 3 10.5 3H9V11.5C9 12 9.3 12.3 10.3 12.3V13H5.7V12.3C6.7 12.3 7 12 7 11.5V3H5.5C4.5 3 4 3.3 3.8 4.5H3Z" fill="#c4c4c4"/></svg><svg style="position:absolute;left:21px;top:372px" width="3" height="3" viewBox="0 0 3 3"><path d="M3 0V3H0Z" fill="#d0d0d0"/></svg><svg style="position:absolute;left:6px;top:379px" width="16" height="14" viewBox="0 0 16 14"><path d="M5 1.5V12.5L7.7 10L10 14L11.5 13L9.3 9.3L12.8 9Z" fill="#2e2e2e" stroke="#c4c4c4" stroke-width="0.9"/></svg><svg style="position:absolute;left:21px;top:392px" width="3" height="3" viewBox="0 0 3 3"><path d="M3 0V3H0Z" fill="#d0d0d0"/></svg><svg style="position:absolute;left:6px;top:400px" width="16" height="14" viewBox="0 0 16 14"><rect x="3" y="1.5" width="10" height="9.5" fill="#808080" stroke="#c4c4c4" stroke-width="1"/></svg><svg style="position:absolute;left:21px;top:410px" width="3" height="3" viewBox="0 0 3 3"><path d="M3 0V3H0Z" fill="#d0d0d0"/></svg><div style="position:absolute;left:4px;top:416px;width:21px;height:1px;background:#3e3e3e"></div><svg style="position:absolute;left:6px;top:421px" width="16" height="14" viewBox="0 0 16 14"><path d="M4.5 12.5C3 11 1.5 9 1.5 8C2 7.3 3 7.8 4 9V3C4 2.3 5 2.3 5 3V7.5V1.5C5 0.8 6.5 0.8 6.5 1.5V7.5V2C6.5 1.3 8 1.3 8 2V7.5V3C8 2.3 9.5 2.3 9.5 3V8.5C10 7.5 10.8 6.5 11.5 6.8C12 7 11.5 8 11 9C10.5 10.3 10 12 9 12.8Z" fill="#c4c4c4"/></svg><svg style="position:absolute;left:21px;top:433px" width="3" height="3" viewBox="0 0 3 3"><path d="M3 0V3H0Z" fill="#d0d0d0"/></svg><svg style="position:absolute;left:6px;top:440px" width="16" height="14" viewBox="0 0 16 14"><circle cx="6" cy="5.5" r="4" fill="#7a7a7a" stroke="#c4c4c4" stroke-width="1.4"/><path d="M8.8 8.5L13 12.5" stroke="#c4c4c4" stroke-width="1.8"/></svg><svg style="position:absolute;left:3px;top:458px" width="22" height="9" viewBox="0 0 22 9"><rect x="3" y="3" width="5.5" height="5.5" fill="#aaa"/><rect x="0.5" y="0.5" width="5" height="5" fill="#222" stroke="#bbb" stroke-width="0.8"/><path d="M14 2.5C16.5 2 18.5 3 19 6" fill="none" stroke="#c4c4c4" stroke-width="1"/><path d="M13 2.5L15 1V4ZM19 8L17.5 6H20.5Z" fill="#c4c4c4"/></svg><div style="position:absolute;left:11px;top:478px;width:13px;height:13px;background:#fff;box-shadow:0 0 0 1px #2a2a2a"></div><div style="position:absolute;left:4px;top:470px;width:13px;height:14px;background:#fff;box-shadow:0 0 0 1px #2a2a2a"></div><svg style="position:absolute;left:6px;top:497px" width="15" height="12" viewBox="0 0 15 12"><rect x="1.2" y="1" width="12.6" height="9.5" fill="#3a3a3a" stroke="#b0b0b0" stroke-width="1"/><circle cx="7.5" cy="5.75" r="3" fill="#5a5a5a" stroke="#9a9a9a" stroke-width="0.8"/></svg><svg style="position:absolute;left:392px;top:90px" width="10" height="10" viewBox="0 0 10 10"><path d="M1.2 1.2L8.8 8.8M8.8 1.2L1.2 8.8" stroke="#333" stroke-width="0.95"/></svg><div style="position:absolute;left:46px;top:135px;width:1.6px;height:231px;background:#cdcdcd"></div><div style="position:absolute;left:46px;top:364.4px;width:261px;height:1.6px;background:#cdcdcd"></div><div style="position:absolute;left:46px;top:135px;width:11px;height:1.6px;background:#cdcdcd"></div><div style="position:absolute;left:299px;top:135px;width:8px;height:1.6px;background:#cdcdcd"></div><div style="position:absolute;left:305.4px;top:135px;width:1.6px;height:231px;background:#cdcdcd"></div><div style="position:absolute;left:104.51px;top:110.00px;white-space:nowrap;line-height:20px;font-family:'Liberation Sans',sans-serif;font-size:10.3px;color:#000;;transform:scaleX(0.9941);transform-origin:0 0">名称<span style="font-size:9.4px">(N):</span></div><div style="position:absolute;left:143px;top:112px;width:164px;height:13px;border:1px solid #0078d7;background:#fff"></div><div style="position:absolute;left:144.5px;top:114px;width:37.5px;height:11.5px;background:#0078d7"></div><div style="position:absolute;left:145.05px;top:110.00px;white-space:nowrap;line-height:20px;font-family:'Liberation Sans',sans-serif;font-size:10.3px;color:#fff;;transform:scaleX(0.9459);transform-origin:0 0">未标题<span style="font-size:9.4px">-2</span></div><div style="position:absolute;left:73.30px;top:130.00px;white-space:nowrap;line-height:20px;font-family:'Liberation Sans',sans-serif;font-size:10.3px;color:#000;;transform:scaleX(0.9486);transform-origin:0 0">预设<span style="font-size:9.4px">(P):</span></div><div style="position:absolute;left:109px;top:130px;width:184px;height:16px;border:1px solid #8a8a8a;background:#fff"></div><svg style="position:absolute;left:284px;top:136.5px" width="8" height="5" viewBox="0 0 8 5"><path d="M1 1L4 4L7 1" fill="none" stroke="#555" stroke-width="1"/></svg><div style="position:absolute;left:113.65px;top:131.00px;white-space:nowrap;line-height:20px;font-family:'Liberation Sans',sans-serif;font-size:10.3px;color:#000;;transform:scaleX(0.9500);transform-origin:0 0">自定</div><div style="position:absolute;left:107.39px;top:154.00px;white-space:nowrap;line-height:20px;font-family:'Liberation Sans',sans-serif;font-size:10.3px;color:#a0a0a0;;transform:scaleX(1.0100);transform-origin:0 0">大小<span style="font-size:9.4px">(I):</span></div><div style="position:absolute;left:143px;top:153px;width:145px;height:15px;border:1px solid #dadada;background:#f2f2f2"></div><svg style="position:absolute;left:279px;top:159.0px" width="8" height="5" viewBox="0 0 8 5"><path d="M1 1L4 4L7 1" fill="none" stroke="#c0c0c0" stroke-width="1"/></svg><div style="position:absolute;left:101.68px;top:174.00px;white-space:nowrap;line-height:20px;font-family:'Liberation Sans',sans-serif;font-size:10.3px;color:#000;;transform:scaleX(1.0167);transform-origin:0 0">宽度<span style="font-size:9.4px">(W):</span></div><div style="position:absolute;left:143px;top:176px;width:71px;height:14px;border:1px solid #a6a6a6;background:#fff"></div><div style="position:absolute;left:146.50px;top:174.00px;white-space:nowrap;line-height:20px;font-family:'Liberation Sans',sans-serif;font-size:10.3px;color:#000;;transform:scaleX(1.0385);transform-origin:0 0"><span style="font-size:9.4px">2.5</span></div><div style="position:absolute;left:218px;top:176px;width:70px;height:14px;border:1px solid #a6a6a6;background:#fff"></div><svg style="position:absolute;left:279px;top:181.5px" width="8" height="5" viewBox="0 0 8 5"><path d="M1 1L4 4L7 1" fill="none" stroke="#555" stroke-width="1"/></svg><div style="position:absolute;left:222.53px;top:175.00px;white-space:nowrap;line-height:20px;font-family:'Liberation Sans',sans-serif;font-size:10.3px;color:#000;;transform:scaleX(0.9667);transform-origin:0 0">厘米</div><div style="position:absolute;left:104.71px;top:197.00px;white-space:nowrap;line-height:20px;font-family:'Liberation Sans',sans-serif;font-size:10.3px;color:#000;;transform:scaleX(0.9882);transform-origin:0 0">高度<span style="font-size:9.4px">(H):</span></div><div style="position:absolute;left:143px;top:198px;width:71px;height:14px;border:1px solid #a6a6a6;background:#fff"></div><div style="position:absolute;left:146.50px;top:197.00px;white-space:nowrap;line-height:20px;font-family:'Liberation Sans',sans-serif;font-size:10.3px;color:#000;;transform:scaleX(1.0385);transform-origin:0 0"><span style="font-size:9.4px">3.5</span></div><div style="position:absolute;left:218px;top:198px;width:70px;height:14px;border:1px solid #a6a6a6;background:#fff"></div><svg style="position:absolute;left:279px;top:203.5px" width="8" height="5" viewBox="0 0 8 5"><path d="M1 1L4 4L7 1" fill="none" stroke="#555" stroke-width="1"/></svg><div style="position:absolute;left:222.53px;top:197.00px;white-space:nowrap;line-height:20px;font-family:'Liberation Sans',sans-serif;font-size:10.3px;color:#000;;transform:scaleX(0.9667);transform-origin:0 0">厘米</div><div style="position:absolute;left:98.00px;top:220.00px;white-space:nowrap;line-height:20px;font-family:'Liberation Sans',sans-serif;font-size:10.3px;color:#000;;transform:scaleX(0.9156);transform-origin:0 0">分辨率<span style="font-size:9.4px">(R):</span></div><div style="position:absolute;left:143px;top:221px;width:71px;height:13px;border:1px solid #a6a6a6;background:#fff"></div><div style="position:absolute;left:146.80px;top:219.00px;white-space:nowrap;line-height:20px;font-family:'Liberation Sans',sans-serif;font-size:10.3px;color:#000;;transform:scaleX(0.9250);transform-origin:0 0"><span style="font-size:9.4px">300</span></div><div style="position:absolute;left:218px;top:221px;width:70px;height:14px;border:1px solid #a6a6a6;background:#fff"></div><svg style="position:absolute;left:279px;top:226.5px" width="8" height="5" viewBox="0 0 8 5"><path d="M1 1L4 4L7 1" fill="none" stroke="#555" stroke-width="1"/></svg><div style="position:absolute;left:223.40px;top:220.00px;white-space:nowrap;line-height:20px;font-family:'Liberation Sans',sans-serif;font-size:10.3px;color:#000;;transform:scaleX(0.9070);transform-origin:0 0">像素<span style="font-size:9.4px">/</span>英寸</div><div style="position:absolute;left:87.60px;top:240.00px;white-space:nowrap;line-height:20px;font-family:'Liberation Sans',sans-serif;font-size:10.3px;color:#000;;transform:scaleX(0.9214);transform-origin:0 0">颜色模式<span style="font-size:9.4px">(M):</span></div><div style="position:absolute;left:143px;top:243px;width:68px;height:14px;border:1px solid #a6a6a6;background:#fff"></div><svg style="position:absolute;left:202px;top:248.5px" width="8" height="5" viewBox="0 0 8 5"><path d="M1 1L4 4L7 1" fill="none" stroke="#555" stroke-width="1"/></svg><div style="position:absolute;left:147.03px;top:241.00px;white-space:nowrap;line-height:20px;font-family:'Liberation Sans',sans-serif;font-size:10.3px;color:#000;;transform:scaleX(0.8690);transform-origin:0 0"><span style="font-size:9.4px">RGB </span>颜色</div><div style="position:absolute;left:218px;top:243px;width:70px;height:14px;border:1px solid #a6a6a6;background:#fff"></div><svg style="position:absolute;left:279px;top:248.5px" width="8" height="5" viewBox="0 0 8 5"><path d="M1 1L4 4L7 1" fill="none" stroke="#555" stroke-width="1"/></svg><div style="position:absolute;left:223.70px;top:241.00px;white-space:nowrap;line-height:20px;font-family:'Liberation Sans',sans-serif;font-size:10.3px;color:#000;;transform:scaleX(0.9529);transform-origin:0 0"><span style="font-size:9.4px">8 </span>位</div><div style="position:absolute;left:87.56px;top:263.00px;white-space:nowrap;line-height:20px;font-family:'Liberation Sans',sans-serif;font-size:10.3px;color:#000;;transform:scaleX(0.9389);transform-origin:0 0">背景内容<span style="font-size:9.4px">(C):</span></div><div style="position:absolute;left:143px;top:265px;width:145px;height:14px;border:1px solid #a6a6a6;background:#fff"></div><svg style="position:absolute;left:279px;top:270.5px" width="8" height="5" viewBox="0 0 8 5"><path d="M1 1L4 4L7 1" fill="none" stroke="#555" stroke-width="1"/></svg><div style="position:absolute;left:147.00px;top:264.00px;white-space:nowrap;line-height:20px;font-family:'Liberation Sans',sans-serif;font-size:10.3px;color:#000;;transform:scaleX(0.9000);transform-origin:0 0">白色</div><svg style="position:absolute;left:61px;top:295px" width="13" height="13" viewBox="0 0 13 13"><circle cx="6.5" cy="6.5" r="5.8" fill="#fafafa" stroke="#c8c8c8" stroke-width="1"/><path d="M4 6.3L6.5 4L9 6.3M4 8.8L6.5 6.5L9 8.8" fill="none" stroke="#222" stroke-width="1.1"/></svg><div style="position:absolute;left:76.85px;top:293.00px;white-space:nowrap;line-height:20px;font-family:'Liberation Sans',sans-serif;font-size:10.3px;color:#000;;transform:scaleX(0.9474);transform-origin:0 0">高级</div><div style="position:absolute;left:101px;top:301px;width:181px;height:1px;background:#d0d0d0"></div><div style="position:absolute;left:69.30px;top:321.00px;white-space:nowrap;line-height:20px;font-family:'Liberation Sans',sans-serif;font-size:10.3px;color:#000;;transform:scaleX(0.9237);transform-origin:0 0">颜色配置文件<span style="font-size:9.4px">(O):</span></div><div style="position:absolute;left:143px;top:322px;width:145px;height:15px;border:1px solid #a6a6a6;background:#fff"></div><svg style="position:absolute;left:279px;top:328.0px" width="8" height="5" viewBox="0 0 8 5"><path d="M1 1L4 4L7 1" fill="none" stroke="#555" stroke-width="1"/></svg><div style="position:absolute;left:147.50px;top:321.00px;white-space:nowrap;line-height:20px;font-family:'Liberation Sans',sans-serif;font-size:10.3px;color:#000;;transform:scaleX(0.9212);transform-origin:0 0"><span style="font-size:9.4px">sRGB IEC61966-2.1</span></div><div style="position:absolute;left:79.70px;top:343.00px;white-space:nowrap;line-height:20px;font-family:'Liberation Sans',sans-serif;font-size:10.3px;color:#000;;transform:scaleX(0.9200);transform-origin:0 0">像素长宽比<span style="font-size:9.4px">(X):</span></div><div style="position:absolute;left:143px;top:344px;width:145px;height:15px;border:1px solid #a6a6a6;background:#fff"></div><svg style="position:absolute;left:279px;top:350.0px" width="8" height="5" viewBox="0 0 8 5"><path d="M1 1L4 4L7 1" fill="none" stroke="#555" stroke-width="1"/></svg><div style="position:absolute;left:146.57px;top:344.00px;white-space:nowrap;line-height:20px;font-family:'Liberation Sans',sans-serif;font-size:10.3px;color:#000;;transform:scaleX(0.9342);transform-origin:0 0">方形像素</div><div style="position:absolute;left:320px;top:113px;width:76px;height:9px;border:2px solid #0078d7;background:#e1e1e1"></div><div style="position:absolute;left:350.40px;top:111.00px;white-space:nowrap;line-height:20px;font-family:'Liberation Sans',sans-serif;font-size:10.3px;color:#000;;transform:scaleX(0.9263);transform-origin:0 0">确定</div><div style="position:absolute;left:320px;top:133px;width:78px;height:11px;border:1px solid #adadad;background:#e1e1e1"></div><div style="position:absolute;left:350.06px;top:131.00px;white-space:nowrap;line-height:20px;font-family:'Liberation Sans',sans-serif;font-size:10.3px;color:#000;;transform:scaleX(0.9444);transform-origin:0 0">复位</div><div style="position:absolute;left:320px;top:154px;width:78px;height:11px;border:1px solid #adadad;background:#e1e1e1"></div><div style="position:absolute;left:331.50px;top:152.00px;white-space:nowrap;line-height:20px;font-family:'Liberation Sans',sans-serif;font-size:10.3px;color:#000;;transform:scaleX(0.9450);transform-origin:0 0">存储预设<span style="font-size:9.4px">(S)...</span></div><div style="position:absolute;left:320px;top:175px;width:78px;height:11px;border:1px solid #cccccc;background:#cccccc"></div><div style="position:absolute;left:330.90px;top:173.00px;white-space:nowrap;line-height:20px;font-family:'Liberation Sans',sans-serif;font-size:10.3px;color:#a4a4a4;;transform:scaleX(0.9517);transform-origin:0 0">删除预设<span style="font-size:9.4px">(D)...</span></div><div style="position:absolute;left:339.15px;top:271.00px;white-space:nowrap;line-height:20px;font-family:'Liberation Sans',sans-serif;font-size:10.3px;color:#000;;transform:scaleX(0.9512);transform-origin:0 0">图像大小<span style="font-size:9.4px">:</span></div><div style="position:absolute;left:345.60px;top:288.00px;white-space:nowrap;line-height:20px;font-family:'Liberation Sans',sans-serif;font-size:10.3px;color:#000;;transform:scaleX(0.9767);transform-origin:0 0"><span style="font-size:9.4px">356.9K</span></div><svg style="position:absolute;left:550px;top:458px" width="44" height="50" viewBox="0 0 44 50"><path d="M21.75 5.10 L38.85 14.90 L38.85 34.50 L21.75 44.30 L4.65 34.50 L4.65 14.90Z" fill="#fff" stroke="#fff" stroke-width="2.8" stroke-linejoin="round"/></svg><div style="position:absolute;left:562px;top:468px;white-space:nowrap;font:28.5px 'Liberation Sans',sans-serif;line-height:29px;color:#222;-webkit-text-stroke:0.6px #222">K</div><div style="position:absolute;left:597px;top:461px;white-space:nowrap;font-family:'Liberation Sans',sans-serif;font-size:27.5px;line-height:32px;font-weight:bold;color:#fff;letter-spacing:-0.6px;transform:scaleY(1.1);transform-origin:0 0">酷易软件园</div><div style="position:absolute;left:598px;top:494px;white-space:nowrap;font-family:'Liberation Sans',sans-serif;font-size:9.6px;line-height:11px;color:#fff;letter-spacing:2.17px;font-weight:bold">WWW.KUYISOFT.COM</div>
</body></html>
